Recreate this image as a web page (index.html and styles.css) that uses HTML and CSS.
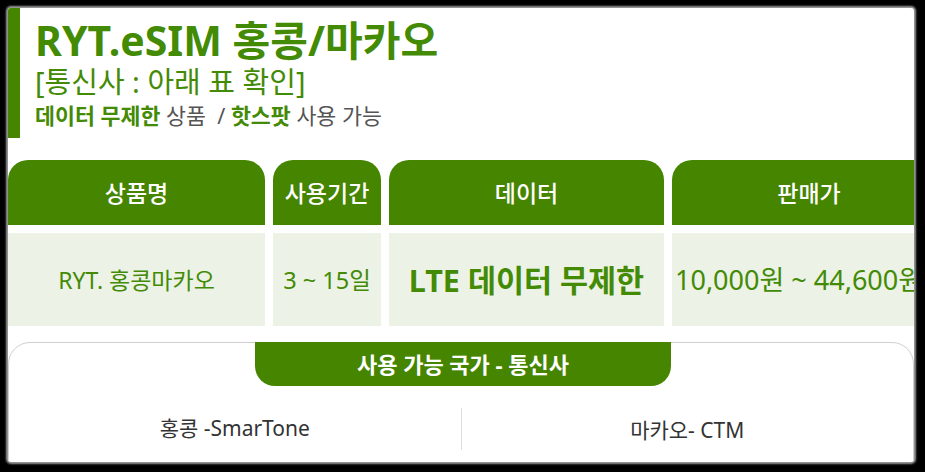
FILE: index.html
```html
<!DOCTYPE html>
<html lang="ko">
<head>
<meta charset="utf-8">
<title>RYT.eSIM 홍콩/마카오</title>
<link rel="stylesheet" href="styles.css">
</head>
<body>
<div class="page">
  <div class="head">
    <div class="bar"></div>
    <div class="head-text">
      <h1 class="title">RYT.eSIM 홍콩/마카오</h1>
      <p class="sub">[통신사 : 아래 표 확인]</p>
      <p class="note"><b>데이터 무제한</b> 상품 &nbsp;/ <b>핫스팟</b> 사용 가능</p>
    </div>
  </div>
  <div class="table">
    <div class="th">상품명</div>
    <div class="th">사용기간</div>
    <div class="th">데이터</div>
    <div class="th">판매가</div>
    <div class="td">RYT. 홍콩마카오</div>
    <div class="td td-period">3 ~ 15일</div>
    <div class="td td-data">LTE 데이터 무제한</div>
    <div class="td td-price">10,000원 ~ 44,600원</div>
  </div>
  <div class="carriers">
    <div class="tab">사용 가능 국가 - 통신사</div>
    <div class="carrier-row">
      <div class="carrier">홍콩 -SmarTone</div>
      <div class="carrier carrier-right">마카오- CTM</div>
    </div>
  </div>
</div>
</body>
</html>
```
FILE: styles.css
```css
* { box-sizing: border-box; }
html, body { margin: 0; padding: 0; }
body {
  background: #000;
  width: 925px;
  height: 472px;
  overflow: hidden;
  font-family: "Noto Sans", "Noto Sans CJK KR", sans-serif;
}
.page {
  margin: 8px 0 0 8px;
  width: 906px;
  height: 454px;
  background: #fff;
  overflow: hidden;
  border-radius: 3px;
  box-shadow: 0 0 2px 2px #9a9a9a;
}
.head {
  display: flex;
  height: 130px;
}
.bar {
  width: 12px;
  background: #468500;
}
.head-text {
  padding: 9px 0 0 15px;
}
.title {
  margin: 0;
  font-size: 41px;
  line-height: 46px;
  font-weight: 700;
  color: #438a05;
}
.sub {
  margin: 0;
  font-size: 29px;
  line-height: 38px;
  font-weight: 400;
  color: #438a05;
}
.note {
  margin: 1px 0 0;
  font-size: 21.7px;
  line-height: 28px;
  color: #555;
}
.note b {
  color: #438a05;
  font-weight: 700;
}
.table {
  margin-top: 22px;
  display: grid;
  grid-template-columns: 257px 108px 275px 274px;
  grid-template-rows: 65px 93px;
  column-gap: 8px;
  row-gap: 8px;
}
.th {
  background: #468500;
  color: #fff;
  border-radius: 20px 20px 0 0;
  display: flex;
  align-items: center;
  justify-content: center;
  font-size: 23px;
  font-weight: 500;
  padding-bottom: 2px;
}
.td {
  background: #ecf2e5;
  color: #438a05;
  display: flex;
  align-items: center;
  justify-content: center;
  font-size: 23px;
  white-space: nowrap;
  padding-bottom: 2px;
}
.td-period { font-size: 23.5px; }
.td-data { font-size: 30.5px; font-weight: 700; }
.td-price { font-size: 27px; overflow: hidden; justify-content: flex-start; padding-left: 3px; }
.carriers {
  margin-top: 16px;
  height: 140px;
  border: 1px solid #cfcfcf;
  border-radius: 22px 22px 0 0;
}
.tab {
  width: 416px;
  height: 44px;
  margin: -1px 0 0 246px;
  background: #468500;
  color: #fff;
  border-radius: 0 0 20px 20px;
  display: flex;
  align-items: center;
  justify-content: center;
  font-size: 22px;
  font-weight: 700;
  padding-bottom: 2px;
}
.carrier-row {
  display: flex;
  margin-top: 22px;
}
.carrier {
  flex: 1;
  text-align: center;
  font-size: 21px;
  line-height: 40px;
  color: #333;
}
.carrier-right {
  border-left: 1px solid #ddd;
  padding-top: 2px;
}
```
